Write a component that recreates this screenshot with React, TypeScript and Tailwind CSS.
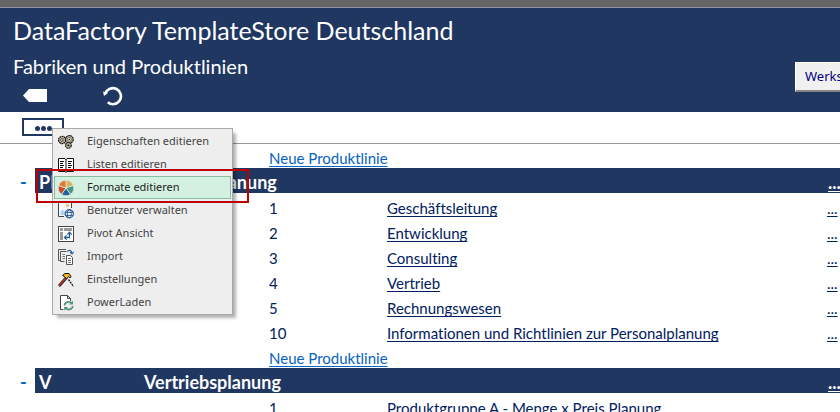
import type { ReactNode } from "react";

const Icon = ({ children }: { children: ReactNode }) => (
  <svg aria-hidden="true" viewBox="0 0 16 16" className="size-4 shrink-0">
    {children}
  </svg>
);

const gear = (cx: number, cy: number, r: number) => (
  <g>
    <circle cx={cx} cy={cy} r={r} fill="#d8cdb4" stroke="#111" strokeWidth="1.3" strokeDasharray="1.8 0.5" />
    <circle cx={cx} cy={cy} r={r - 1.8} fill="#efe8d6" stroke="#3a3428" strokeWidth="0.7" />
    <circle cx={cx} cy={cy} r="0.7" fill="#111" />
  </g>
);

const GearsIcon = () => (
  <Icon>
    {gear(4.2, 6, 3.6)}
    {gear(11.4, 5.4, 3.8)}
    {gear(10.4, 11.4, 2.8)}
  </Icon>
);

const BookIcon = () => (
  <Icon>
    <path d="M0.5 1.5H7L8 2.5L9 1.5H15.5V14.5H9L8 15.5L7 14.5H0.5Z" fill="#fff" stroke="#111" />
    <path d="M8 2V15" stroke="#111" fill="none" />
    <path d="M2 4.5H6M2 6.5H5M2 8.5H6M2 10.5H5M2 12.5H6M10 4.5H14M10 6.5H13M10 8.5H14M10 10.5H13M10 12.5H14" stroke="#111" />
  </Icon>
);

const PieIcon = () => (
  <Icon>
    <g stroke="#d3f0e0" strokeWidth="0.8">
      <path d="M8 8L8 0.3A7.7 7.7 0 0 1 15.3 5.6Z" fill="#e3ae60" />
      <path d="M8 8L15.3 5.6A7.7 7.7 0 0 1 12.5 14.2Z" fill="#4d9478" />
      <path d="M8 8L12.5 14.2A7.7 7.7 0 0 1 3.5 14.2Z" fill="#2462a5" />
      <path d="M8 8L3.5 14.2A7.7 7.7 0 0 1 0.7 5.6Z" fill="#d3492c" />
      <path d="M8 8L0.7 5.6A7.7 7.7 0 0 1 8 0.3Z" fill="#df7c32" />
    </g>
  </Icon>
);

const UserIcon = () => (
  <Icon>
    <path d="M0 0H14V8L7 14H0Z" fill="#f8f8f8" />
    <path d="M0.5 0V13.5H6M13.5 0V5" fill="none" stroke="#444" />
    <circle cx="9.5" cy="2.4" r="1.8" fill="#eec48a" />
    <path d="M2.5 12V9.5Q2.5 7 5 7Q7 7 7 9.5V12Z" fill="#b4d3ee" />
    <circle cx="11.3" cy="10.8" r="4.1" fill="#fff" stroke="#2f5f95" strokeWidth="1.2" />
    <path d="M7.4 9.4H15.2M7.4 12.4H15.2" stroke="#2f5f95" />
    <ellipse cx="11.3" cy="10.8" rx="2" ry="4" fill="none" stroke="#2f5f95" />
  </Icon>
);

const PivotIcon = () => (
  <Icon>
    <rect x="0.5" y="0.5" width="15" height="15" fill="#fff" stroke="#444" />
    <path d="M2 2H5V5H2ZM6 2H14V5H6ZM2 6H5V14H2Z" fill="#999" />
    <path d="M7 11.5H11.5V7" fill="none" stroke="#245a96" strokeWidth="1.3" />
    <path d="M9.3 8.6L11.5 6.2L13.7 8.6M8.6 9.3L6.4 11.5L8.6 13.7" fill="none" stroke="#245a96" strokeWidth="1.2" />
  </Icon>
);

const ImportIcon = () => (
  <Icon>
    <path d="M0.5 9.5V0.5H8M2.5 11.5H0.5V9M6.5 12.5H2.5V2.5H8.5" fill="none" stroke="#555" />
    <path d="M4.5 5.5H7M4.5 7.5H7M4.5 9.5H7" stroke="#777" />
    <path d="M8.5 6.5H12.5L14.5 8.5V15.5H8.5Z" fill="#fff" stroke="#555" />
    <path d="M10 9.5H13M10 11.5H13M10 13.5H13" stroke="#777" />
    <path d="M9 2.4Q13.5 -0.5 14 4.5M11.8 2.8L14 5L16 2.8" fill="none" stroke="#2b5f99" strokeWidth="1.1" />
  </Icon>
);

const HammerIcon = () => (
  <Icon>
    <path d="M1 14L8.5 5.5" stroke="#111" strokeWidth="2.8" />
    <path d="M1 13.7L8.5 5.3" stroke="#d3372c" strokeWidth="1.4" />
    <path d="M4.5 3.5L7 1.5H11L13 4.5L12 6L10.5 4.5L8.5 7L6.5 4.5Z" fill="#f2b91c" stroke="#111" />
    <path d="M10.5 7.5L15.5 14.5" stroke="#111" strokeWidth="1.3" strokeDasharray="2 0.8" />
  </Icon>
);

const PowerIcon = () => (
  <Icon>
    <path d="M5.5 14.5H2.5V0.5H9.5L12.5 3.5V6" fill="#fff" stroke="#444" />
    <path d="M9.5 0.5V3.5H12.5" fill="none" stroke="#444" />
    <circle cx="10.6" cy="10.7" r="4.8" fill="#eee" />
    <path d="M6.4 10.3A4.2 4 0 0 1 14 8.6M14.8 11.2A4.2 4 0 0 1 7.2 12.8" fill="none" stroke="#4d9478" strokeWidth="1.7" />
    <path d="M15 5.8V9.6H11.2ZM6.2 15.7V11.9H10Z" fill="#4d9478" />
  </Icon>
);

const menuItems = [
  { label: "Eigenschaften editieren", icon: <GearsIcon /> },
  { label: "Listen editieren", icon: <BookIcon /> },
  { label: "Formate editieren", icon: <PieIcon />, active: true },
  { label: "Benutzer verwalten", icon: <UserIcon /> },
  { label: "Pivot Ansicht", icon: <PivotIcon /> },
  { label: "Import", icon: <ImportIcon /> },
  { label: "Einstellungen", icon: <HammerIcon /> },
  { label: "PowerLaden", icon: <PowerIcon /> },
];

const groups = [
  {
    code: "PE",
    name: "Personalplanung",
    lines: [
      ["1", "Geschäftsleitung"],
      ["2", "Entwicklung"],
      ["3", "Consulting"],
      ["4", "Vertrieb"],
      ["5", "Rechnungswesen"],
      ["10", "Informationen und Richtlinien zur Personalplanung"],
    ],
  },
  { code: "V", name: "Vertriebsplanung", lines: [["1", "Produktgruppe A - Menge x Preis Planung"]] },
];

const link = "underline decoration-1 underline-offset-2 [text-decoration-skip-ink:none]";

function Group({ code, name, lines }: { code: string; name: string; lines: string[][] }) {
  return (
    <tbody>
      <tr>
        <td colSpan={3} />
        <td colSpan={3}>
          <a href="#neu" className={`${link} text-[#0563c1]`}>Neue Produktlinie</a>
        </td>
      </tr>
      <tr className="text-lg/[18px] font-bold text-white [&>td]:pt-[5px]! [&>td]:pb-[2px]!">
        <td className="pl-5">
          <button type="button" aria-label="Gruppe zuklappen" className="block text-[#0563c1]">-</button>
        </td>
        <td className="bg-[#203762] pl-1">{code}</td>
        <td colSpan={3} className="bg-[#203762]">{name}</td>
        <td className="bg-[#203762] pl-px">
          <a href="#gruppe" className={link}>...</a>
        </td>
      </tr>
      {lines.map(([nr, title]) => (
        <tr key={nr}>
          <td colSpan={3} />
          <td>{nr}</td>
          <td>
            <a href="#linie" className={link}>{title}</a>
          </td>
          <td>
            <a href="#mehr" className={link}>...</a>
          </td>
        </tr>
      ))}
    </tbody>
  );
}

export default function App() {
  return (
    <div className="h-screen overflow-hidden bg-white font-['Lato','Liberation_Sans',sans-serif] text-[15px] text-[#002060] [font-variant-ligatures:none]">
      <div className="h-2 border-b border-[#8f95a3] bg-[#666]" />
      <header className="flex h-[104px] justify-between bg-[#203762] text-white">
        <div className="flex flex-col pl-[13px] pt-1">
          <h1 className="text-[25px] leading-9">DataFactory TemplateStore Deutschland</h1>
          <h2 className="text-xl leading-9">Fabriken und Produktlinien</h2>
          <div className="flex items-center gap-14 pl-[10px] pt-0.5">
            <button type="button" aria-label="Zurück">
              <svg viewBox="0 0 24 20" className="h-5 w-6">
                <path d="M0 9.5L6 3H24V16H6Z" fill="#fff" />
              </svg>
            </button>
            <button type="button" aria-label="Aktualisieren">
              <svg viewBox="0 0 20 20" className="size-5">
                <path d="M2.4 7.5A8 8 0 1 1 4.8 16.3" fill="none" stroke="#fff" strokeWidth="2.6" />
                <path d="M0 5.5L1 10L5 7Z" fill="#fff" />
              </svg>
            </button>
          </div>
        </div>
        <button
          type="button"
          className="mt-[54px] h-[30px] w-[45px] overflow-hidden border-b-2 border-l border-t border-b-[#868686] border-l-white border-t-white bg-[#f0f0f0] pl-[9px] text-left font-['Noto_Sans',sans-serif] text-[13px] text-[#000080]"
        >
          Werks
        </button>
      </header>

      <div className="relative h-8 border-b border-[#999] pl-[22px] pt-1.5">
        <button
          type="button"
          aria-label="Menü"
          className="flex h-[18px] w-[42px] items-center justify-center gap-px border-2 border-[#203762] pt-[3px]"
        >
          <span className="size-[5px] rounded-full bg-[#203762]" />
          <span className="size-[5px] rounded-full bg-[#203762]" />
          <span className="size-[5px] rounded-full bg-[#203762]" />
        </button>
        <div
          role="menu"
          className="absolute left-[52px] top-4 w-[181px] border border-[#a8a8a8] bg-[#eee] px-px pt-px font-['Noto_Sans','Open_Sans',sans-serif] text-[11px] text-[#444] shadow-[4px_4px_3px_-1px_rgba(0,0,0,0.3)]"
        >
          {menuItems.map(({ label, icon, active }) => (
            <button
              key={label}
              type="button"
              role="menuitem"
              className={`flex h-[23px] w-full items-center gap-[13px] border pl-[3px] ${
                active ? "border-[#86bfa0] bg-[#d3f0e0] text-[#222]" : "border-transparent"
              }`}
            >
              {icon}
              {label}
            </button>
          ))}
        </div>
        <div className="pointer-events-none absolute left-9 top-[57px] h-[34px] w-[213px] border-2 border-[#c00000]" />
      </div>

      <table className="-mt-px w-full table-fixed border-collapse text-left leading-[18px] [&_td]:whitespace-nowrap [&_td]:pb-px [&_td]:pt-[6px]">
        <colgroup>
          <col className="w-[35px]" />
          <col className="w-[109px]" />
          <col className="w-[125px]" />
          <col className="w-[118px]" />
          <col />
          <col className="w-[13px]" />
        </colgroup>
        {groups.map((group) => (
          <Group key={group.code} {...group} />
        ))}
      </table>
    </div>
  );
}
